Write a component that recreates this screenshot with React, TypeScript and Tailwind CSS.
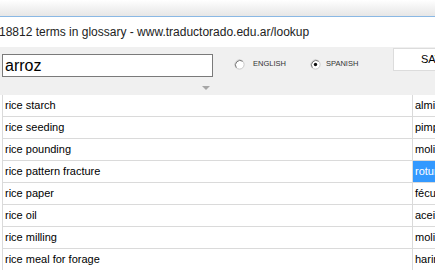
const rows = [
  ["rice starch", "almidón de arroz"],
  ["rice seeding", "pimpollo de arroz"],
  ["rice pounding", "molienda de arroz"],
  ["rice pattern fracture", "rotura de arroz"],
  ["rice paper", "fécula de arroz"],
  ["rice oil", "aceite de arroz"],
  ["rice milling", "molienda de arroz"],
  ["rice meal for forage", "harina de arroz"],
];

function Radio({ checked }: { checked?: boolean }) {
  return (
    <svg width="11" height="11" viewBox="0 0 11 11">
      <circle cx="5.5" cy="5.5" r="4.6" fill="#fff" stroke="#c8c8c8" />
      <path d="M2.3 8.7 A4.6 4.6 0 0 1 8.7 2.3" fill="none" stroke="#7a7a7a" />
      {checked && <circle cx="5.5" cy="5.5" r="1.7" fill="#111" />}
    </svg>
  );
}

export default function App() {
  return (
    <div className="w-[435px] h-[270px] overflow-hidden bg-white font-['Liberation_Sans',Arial,sans-serif] text-black">
      <div className="h-[17px] bg-gradient-to-b from-white to-[#e6e6e6] border-b border-[#8ab8e4]" />
      <div className="h-[30px] flex items-center text-[12px] text-[#222] -ml-px whitespace-nowrap">
        18812 terms in glossary - www.traductorado.edu.ar/lookup
      </div>

      <div className="h-[48px] bg-[#f0f0f0] flex pl-[2px]">
        <div className="flex flex-col pt-[7px]">
          <div className="w-[211px] h-[23px] border border-[#7a7a7a] bg-white flex items-center pl-[2px] text-[16px] leading-none">
            arroz
          </div>
          <svg className="self-end mr-[3px] mt-[9px]" width="8" height="4" viewBox="0 0 8 4">
            <path d="M0 0 H8 L4 4 Z" fill="#a6a6a6" />
          </svg>
        </div>

        <div className="flex items-center h-[30px] pt-[4px] ml-[21px] text-[7.5px] text-[#333]">
          <Radio />
          <span className="ml-[8px]">ENGLISH</span>
          <span className="ml-[24px]">
            <Radio checked />
          </span>
          <span className="ml-[5px]">SPANISH</span>
        </div>

        <div className="ml-auto mt-px w-[42px] h-[23px] bg-white border border-[#dcdcdc] border-r-0 flex items-center pl-[27px] text-[11px] whitespace-nowrap overflow-hidden">
          SAVE
        </div>
      </div>

      <div className="ml-[2px] border-l border-[#dadada]">
        {rows.map(([en, es], i) => (
          <div key={en} className="flex h-[22px] border-b border-[#dadada] text-[11px]">
            <div className="w-[409px] pl-[2px] flex items-center">{en}</div>
            <div
              className={
                i === 3
                  ? "flex-1 border-l border-[#dadada] bg-[#3399ff] text-white pl-[2px] flex items-center whitespace-nowrap overflow-hidden"
                  : "flex-1 border-l border-[#dadada] pl-[2px] flex items-center whitespace-nowrap overflow-hidden"
              }
            >
              {es}
            </div>
          </div>
        ))}
      </div>
    </div>
  );
}
